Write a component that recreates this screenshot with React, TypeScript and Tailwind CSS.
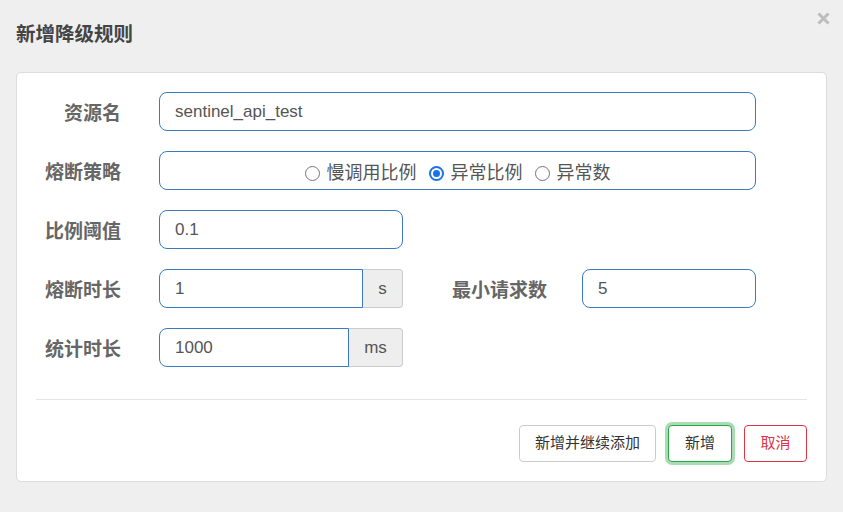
import React from "react";

const font = { fontFamily: '"Liberation Sans", "Noto Sans CJK SC", sans-serif' };

function Label({ text, className = "w-[104px]" }: { text: string; className?: string }) {
  return (
    <div className={`${className} shrink-0 pt-[5px] text-right text-[19px] font-bold text-[#666]`}>
      {text}
    </div>
  );
}

function Radio({ checked, text }: { checked?: boolean; text: string }) {
  return (
    <label className="flex items-center gap-[7px]">
      {checked ? (
        <span className="flex h-[15px] w-[15px] items-center justify-center rounded-full border-[2px] border-[#1a73e8] bg-white">
          <span className="h-[7px] w-[7px] rounded-full bg-[#1a73e8]" />
        </span>
      ) : (
        <span className="h-[15px] w-[15px] rounded-full border border-[#767676] bg-white" />
      )}
      <span className="text-[18px] text-[#555]">{text}</span>
    </label>
  );
}

export default function App() {
  return (
    <div className="h-[512px] w-[843px] overflow-hidden bg-[#efefef]" style={font}>
      <div className="flex items-start justify-between pl-[16px] pr-[13px] pt-[20px]">
        <h4 className="text-[19.5px] font-bold leading-[28px] text-[#444]">新增降级规则</h4>
        <svg width="13" height="13" viewBox="0 0 13 13" className="-mt-[8px]">
          <path d="M1.5 1.5 L11.5 11.5 M11.5 1.5 L1.5 11.5" stroke="#bdbdbd" strokeWidth="3" />
        </svg>
      </div>

      <div className="mx-[16px] mt-[24px] h-[410px] rounded-[5px] border border-[#dcdcdc] bg-white pt-[19px]">
        <div className="flex flex-col gap-[20px]">
          <div className="flex items-center">
            <Label text="资源名" />
            <div className="ml-[38px] flex h-[39px] w-[597px] items-center rounded-[8px] border border-[#3a7bbf] px-[15px] pt-[1px] text-[17px] text-[#555]">
              sentinel_api_test
            </div>
          </div>

          <div className="flex items-center">
            <Label text="熔断策略" />
            <div className="ml-[38px] flex h-[39px] w-[597px] items-center justify-center gap-[12px] rounded-[8px] border border-[#3a7bbf] pt-[5px]">
              <Radio text="慢调用比例" />
              <Radio text="异常比例" checked />
              <Radio text="异常数" />
            </div>
          </div>

          <div className="flex items-center">
            <Label text="比例阈值" />
            <div className="ml-[38px] flex h-[39px] w-[244px] items-center rounded-[8px] border border-[#3a7bbf] px-[15px] pt-[1px] text-[17px] text-[#555]">
              0.1
            </div>
          </div>

          <div className="flex items-center">
            <Label text="熔断时长" />
            <div className="ml-[38px] flex h-[39px] w-[244px]">
              <div className="flex w-[204px] items-center rounded-l-[8px] border border-[#3a7bbf] px-[15px] pt-[1px] text-[17px] text-[#555]">
                1
              </div>
              <div className="flex flex-1 items-center justify-center rounded-r-[4px] border border-l-0 border-[#ccc] bg-[#eee] pt-[1px] text-[17px] text-[#555]">
                s
              </div>
            </div>
            <Label text="最小请求数" className="w-[144px]" />
            <div className="ml-[35px] flex h-[39px] w-[174px] items-center rounded-[8px] border border-[#3a7bbf] px-[15px] pt-[1px] text-[17px] text-[#555]">
              5
            </div>
          </div>

          <div className="flex items-center">
            <Label text="统计时长" />
            <div className="ml-[38px] flex h-[39px] w-[244px]">
              <div className="flex w-[190px] items-center rounded-l-[8px] border border-[#3a7bbf] px-[15px] pt-[1px] text-[17px] text-[#555]">
                1000
              </div>
              <div className="flex flex-1 items-center justify-center rounded-r-[4px] border border-l-0 border-[#ccc] bg-[#eee] pt-[1px] text-[17px] text-[#555]">
                ms
              </div>
            </div>
          </div>
        </div>

        <div className="mx-[19px] mt-[32px] border-t border-[#e5e5e5]" />

        <div className="mr-[19px] mt-[25px] flex justify-end gap-[12px] text-[15px]">
          <button className="h-[37px] w-[137px] rounded-[4px] border border-[#ccc] bg-white text-[#333]">
            新增并继续添加
          </button>
          <button className="h-[37px] w-[64px] rounded-[4px] border border-[#28a745] bg-white text-[#333] shadow-[0_0_0_3px_rgba(40,167,69,0.4)]">
            新增
          </button>
          <button className="h-[37px] w-[63px] rounded-[4px] border border-[#dc3545] bg-white text-[#dc3545]">
            取消
          </button>
        </div>
      </div>
    </div>
  );
}
